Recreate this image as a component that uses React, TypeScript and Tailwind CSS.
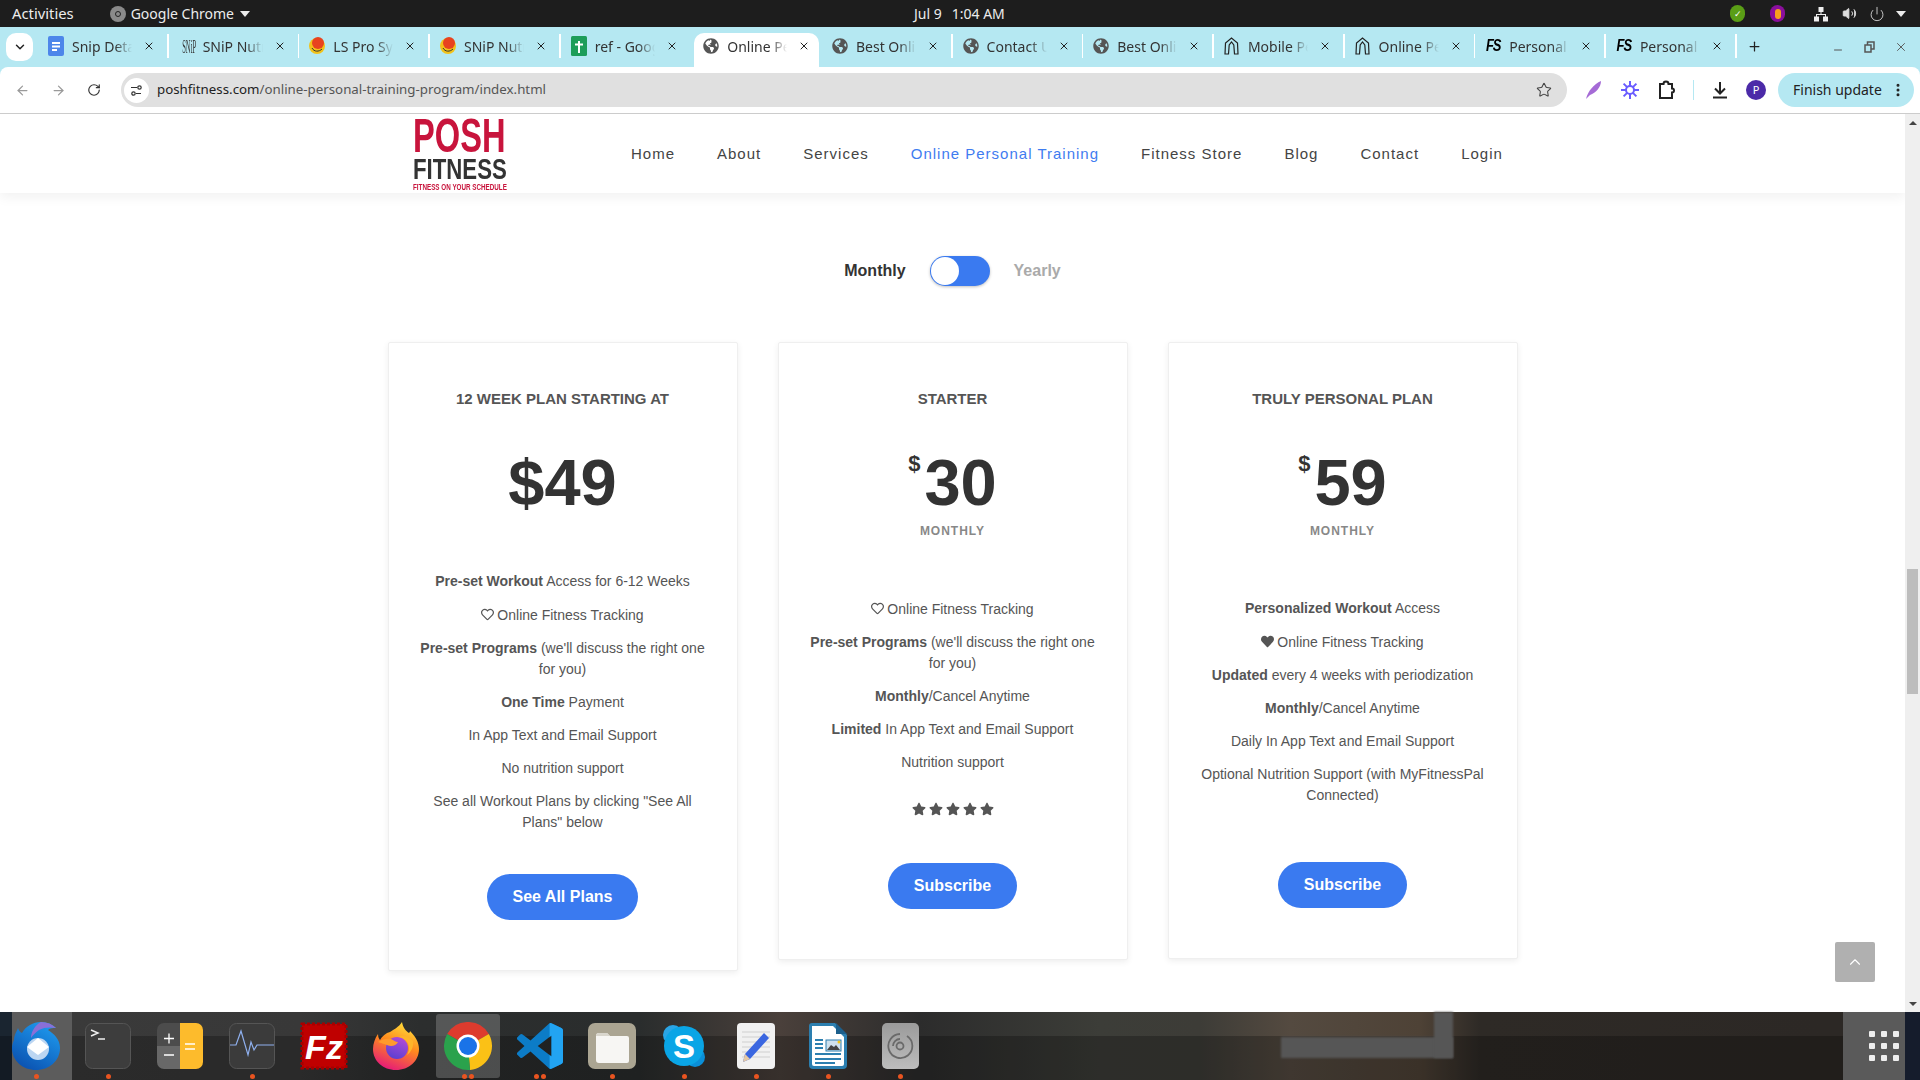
import React from "react";
import { FaGlobeAmericas, FaHeart, FaRegHeart, FaStar } from "react-icons/fa";
import { ArrowLeft, ArrowRight, RotateCw, X, Star, Plus, Minus, EllipsisVertical, ChevronUp, ChevronDown, Volume2, Power } from "lucide-react";

const Globe = () => <FaGlobeAmericas size={16} color="#555" />;
const FS = () => <span className="w-4 origin-center scale-y-[1.25] text-center text-[13px] leading-4 font-black tracking-[-1px] text-black italic [font-family:'Liberation_Sans',sans-serif]">FS</span>;
const Arch = () => (
  <svg width="15" height="18" viewBox="0 0 15 18" fill="none" stroke="#222" strokeWidth="1.2"><path d="M1 17 L1.500 6 L7.500 1 L13.500 6 L14 17 H10.500 L9.800 8 L7.500 5 L5.200 8 L4.500 17 Z" /></svg>
);
const Doc = () => (
  <svg width="16" height="20" viewBox="0 0 16 20"><rect width="16" height="20" rx="2" fill="#4d86ea" /><path d="M4 7h8M4 10.500h8M4 14h5" stroke="#fff" strokeWidth="1.800" /></svg>
);
const Snip = () => <span className="w-4 origin-center scale-x-[0.6] scale-y-[1.7] text-center text-[11px] leading-[10px] text-[#333] [font-family:'Liberation_Serif',serif]">SNiP</span>;
const Ball = () => (
  <svg width="16" height="20" viewBox="0 0 16 20"><circle cx="8" cy="10" r="8" fill="#f2c21a" /><circle cx="9" cy="7" r="6" fill="#e8431f" /><path d="M3 12c2 4 7 4 10 1" stroke="#333" fill="none" /></svg>
);
const Sheet = () => (
  <svg width="16" height="20" viewBox="0 0 16 20"><rect width="16" height="20" rx="1.500" fill="#1d9d59" /><path d="M8 5v12M4 8.500h8" stroke="#fff" strokeWidth="2" /></svg>
);

const tabs: [React.ReactNode, string, boolean?][] = [
  [<Doc />, "Snip Details"],
  [<Snip />, "SNiP Nutrition"],
  [<Ball />, "LS Pro System"],
  [<Ball />, "SNiP Nutrition"],
  [<Sheet />, "ref - Google"],
  [<Globe />, "Online Personal", true],
  [<Globe />, "Best Online"],
  [<Globe />, "Contact Us"],
  [<Globe />, "Best Online"],
  [<Arch />, "Mobile Personal"],
  [<Arch />, "Online Personal"],
  [<FS />, "Personal Trainer"],
  [<FS />, "Personal Trainer"],
];

function TopBar() {
  return (
    <div className="relative flex h-[27px] shrink-0 items-center bg-[#1d1d1d] pr-[14px] pl-3 text-[14px] text-[#ececec]">
      <span className="text-[14.800px]">Activities</span>
      <span className="ml-[36px] flex h-4 w-4 items-center justify-center rounded-full bg-[#8a8a8a]"><span className="h-[6px] w-[6px] rounded-full border border-[#222]" /></span>
      <span className="ml-[5px]">Google Chrome</span>
      <span className="ml-[6px] h-0 w-0 border-x-[5px] border-t-[6px] border-x-transparent border-t-[#ececec]" />
      <span className="ml-[664px]">Jul 9</span>
      <span className="ml-[10px]">1:04 AM</span>
      <div className="ml-auto flex items-center">
        <span className="flex h-[17px] w-[15px] items-center justify-center rounded-full bg-[#5a9e16] text-[9px] leading-none text-white">✓</span>
        <span className="ml-[25px] flex h-[17px] w-[15px] items-center justify-center rounded-full bg-[#8a0f9c]">
          <span className="h-[10px] w-[6px] rounded-full bg-[#f7a11e]" />
        </span>
        <svg className="ml-[28px]" width="16" height="16" viewBox="0 0 16 16" fill="#eee"><rect x="5.500" y="1" width="5" height="5" /><rect x="1" y="10.500" width="5" height="5" /><rect x="10" y="10.500" width="5" height="5" /><path d="M7.500 6h1v2H13v3h-1V9H4v2H3V8h4.500z" /></svg>
        <Volume2 className="ml-[13px]" size={15} color="#ddd" fill="#ddd" strokeWidth={1.500} />
        <Power className="ml-[12px]" size={16} color="#ddd" strokeWidth={1.300} />
        <span className="ml-[11px] h-0 w-0 border-x-[5px] border-t-[6px] border-x-transparent border-t-[#ececec]" />
      </div>
    </div>
  );
}

function TabStrip() {
  return (
    <div className="flex h-[40px] shrink-0 items-stretch bg-[#b5e8f2] pl-[6px] text-[14px] text-[#333]">
      <div className="my-[6px] mr-[5px] flex w-[27px] items-center justify-center rounded-[10px] bg-white"><ChevronDown size={14} strokeWidth={2.500} color="#222" /></div>
      {tabs.map(([icon, title, active], i) => (
        <div key={i} className={active ? "mt-[6px] mr-[2.670px] ml-[3px] flex w-[125px] items-center rounded-t-[10px] bg-white pb-[8px] pl-[9px]" : "flex w-[130.670px] items-center pb-[2px] pl-[10px]"}>
          <span className="flex w-4 shrink-0 items-center justify-center">{icon}</span>
          <span className="ml-2 w-[60px] overflow-hidden whitespace-nowrap [mask-image:linear-gradient(to_right,black_72%,transparent)]">{title}</span>
          <X className="ml-[11px] shrink-0" size={12} strokeWidth={2} color="#222" />
          {!active && i !== 4 && <span className="ml-auto h-[24px] w-[1.500px] bg-white" />}
        </div>
      ))}
      <Plus className="mb-[2px] ml-[10px] self-center" size={15} strokeWidth={2} color="#222" />
      <div className="ml-auto flex items-center pr-[12px]">
        <Minus size={12} strokeWidth={2} color="#555" className="mt-[6px]" />
        <svg className="ml-[20px]" width="11" height="12" viewBox="0 0 11 12" fill="none" stroke="#555" strokeWidth="1.500"><rect x="3.500" y="1" width="6.500" height="7" /><rect x="1" y="4" width="6" height="7" fill="#b5e8f2" /></svg>
        <X className="ml-[19px]" size={14} strokeWidth={1.600} color="#555" />
      </div>
    </div>
  );
}

function Toolbar() {
  return (
    <div className="flex h-[46px] shrink-0 items-center rounded-t-[8px] bg-white pr-[6px] pl-[15px] text-[14px]">
      <ArrowLeft size={15} color="#9a9a9a" strokeWidth={2} />
      <ArrowRight className="ml-[21px]" size={15} color="#9a9a9a" strokeWidth={2} />
      <RotateCw className="ml-[21px]" size={14} color="#333" strokeWidth={2} />
      <div className="ml-[20px] flex h-[34px] w-[1446px] items-center rounded-full bg-[#e0e0e0] pr-[15px] pl-[3px]">
        <span className="flex h-[25px] w-[25px] items-center justify-center rounded-full bg-white">
          <svg width="13" height="13" viewBox="0 0 13 13" fill="none" stroke="#333" strokeWidth="1.200"><path d="M1 3.500h6M11 9.500H6" /><circle cx="9.500" cy="3.500" r="1.700" /><circle cx="3.500" cy="9.500" r="1.700" /></svg>
        </span>
        <span className="ml-[8px] text-[13.300px] text-[#222]">poshfitness.com<span className="text-[#555]">/online-personal-training-program/index.html</span></span>
        <Star className="ml-auto" size={16} color="#444" strokeWidth={1.600} />
      </div>
      <svg className="ml-[18px]" width="18" height="20" viewBox="0 0 18 20"><path d="M1 19C3 11 9 4 16 1c0 6-5 12-11 14z" fill="#a56bd6" /></svg>
      <svg className="ml-[18px]" width="18" height="18" viewBox="0 0 18 18" stroke="#6a5cff" strokeWidth="2" fill="none"><circle cx="9" cy="9" r="4" /><path d="M9 0v5M9 13v5M0 9h5M13 9h5M2.600 2.600l3.500 3.500M11.900 11.900l3.500 3.500M15.400 2.600l-3.500 3.500M6.100 11.900l-3.500 3.500" /></svg>
      <svg className="ml-[18px]" width="18" height="20" viewBox="0 0 18 20" fill="none" stroke="#222" strokeWidth="2"><path d="M3 4h3.500a2.500 2.500 0 0 1 5 0H15v4.500a2 2 0 0 1 0 4V18H3z" /></svg>
      <span className="ml-[18px] h-[20px] w-px bg-[#b5e8f2]" />
      <svg className="ml-[17px]" width="18" height="18" viewBox="0 0 18 18" fill="none" stroke="#222" strokeWidth="2"><path d="M9 1v11M4 7.500l5 5 5-5M2 16.500h14" /></svg>
      <span className="ml-[17px] flex h-[20px] w-[20px] items-center justify-center rounded-full bg-[#4b2aa8] text-[11px] text-white">P</span>
      <div className="ml-[12px] flex h-[34px] w-[136px] items-center rounded-full bg-[#b5e8f2] pb-[2px] pl-[15px] text-[14px] text-[#222]">
        <span className="whitespace-nowrap">Finish update</span>
        <EllipsisVertical className="mt-[2px] mr-[8px] ml-auto" size={16} color="#222" strokeWidth={2.500} />
      </div>
    </div>
  );
}

function Logo() {
  return (
    <div className="flex w-[94px] flex-col pt-1 font-bold whitespace-nowrap [font-family:'Liberation_Sans',sans-serif]">
      <span className="h-[35px] origin-left scale-x-[0.68] text-[48px] leading-[35px] text-[#c8143c]">POSH</span>
      <span className="mt-[5px] h-[22px] origin-left scale-x-[0.74] text-[30px] leading-[22px] text-[#333]">FITNESS</span>
      <span className="mt-1 h-[6px] origin-left scale-x-[0.74] text-[8.500px] leading-[6px] text-[#c8143c]">FITNESS ON YOUR SCHEDULE</span>
    </div>
  );
}

const navItems = ["Home", "About", "Services", "Online Personal Training", "Fitness Store", "Blog", "Contact", "Login"];

function Header() {
  return (
    <div className="relative flex h-[79px] items-start pl-[413px] shadow-[0_4px_12px_rgba(0,0,0,0.06)]">
      <Logo />
      <nav className="ml-[124px] flex h-full items-center gap-[42px] pt-[2px] text-[15px] tracking-[1px] text-[#444]">
        {navItems.map((n) => (
          <span key={n} className={n.startsWith("Online") ? "text-[#3f7cf0]" : ""}>{n}</span>
        ))}
      </nav>
    </div>
  );
}

type Item = React.ReactNode;

function Card({ title, price, dollar, monthly, items, button, listMt, stars, btnMt }: { title: string; price: string; dollar?: boolean; monthly?: boolean; items: Item[]; button: string; listMt: string; stars?: boolean; btnMt: string }) {
  return (
    <div className="flex w-[350px] flex-col items-center rounded-[2px] border border-[#efefef] bg-white px-[25px] pt-[45px] pb-[50px] text-center text-[14px] leading-[21px] text-[#555] shadow-[0_2px_6px_rgba(0,0,0,0.07)]">
      <h3 className="text-[15px] font-bold uppercase">{title}</h3>
      <div className="mt-[38px] flex h-[72px] justify-center text-[65px] leading-[72px] font-bold text-[#333]">
        {dollar && <span className="mt-[5px] mr-[4px] text-[22px] leading-6">$</span>}
        {price}
      </div>
      {monthly && <div className="mt-[2px] text-[12px] leading-5 font-bold tracking-[1px] text-[#888]">MONTHLY</div>}
      <ul className={listMt + " flex flex-col gap-[12px]"}>
        {items.map((it, i) => <li key={i}>{it}</li>)}
      </ul>
      {stars && (
        <div className="mt-[28px] flex h-4 items-center gap-[3px] text-[#555]">
          {[0, 1, 2, 3, 4].map((i) => <FaStar key={i} size={14} />)}
        </div>
      )}
      <button className={btnMt + " h-[46px] rounded-full bg-[#3a7af0] px-[26px] pb-px text-[16px] font-bold text-white"}>{button}</button>
    </div>
  );
}

const B = ({ children }: { children: React.ReactNode }) => <b className="font-bold">{children}</b>;
const OutlineHeart = () => <FaRegHeart size={13} className="mr-[3px] inline align-[-1px]" />;
const SolidHeart = () => <FaHeart size={13} className="mr-[3px] inline align-[-1px]" />;

function Pricing() {
  return (
    <div className="flex items-start justify-center gap-[40px]">
      <Card
        title="12 Week Plan Starting at"
        price="$49"
        listMt="mt-[52px]"
        btnMt="mt-[41px]"
        button="See All Plans"
        items={[
          <><B>Pre-set Workout</B> Access for 6-12 Weeks</>,
          <div className="pt-px"><OutlineHeart />Online Fitness Tracking</div>,
          <><B>Pre-set Programs</B> (we'll discuss the right one for you)</>,
          <><B>One Time</B> Payment</>,
          "In App Text and Email Support",
          "No nutrition support",
          <>See all Workout Plans by clicking "See All Plans" below</>,
        ]}
      />
      <Card
        title="Starter"
        price="30"
        dollar
        monthly
        stars
        listMt="mt-[58px]"
        btnMt="mt-[46px]"
        button="Subscribe"
        items={[
          <><OutlineHeart />Online Fitness Tracking</>,
          <><B>Pre-set Programs</B> (we'll discuss the right one for you)</>,
          <><B>Monthly</B>/Cancel Anytime</>,
          <><B>Limited</B> In App Text and Email Support</>,
          "Nutrition support",
        ]}
      />
      <Card
        title="Truly Personal Plan"
        price="59"
        dollar
        monthly
        listMt="mt-[57px]"
        btnMt="mt-[56px]"
        button="Subscribe"
        items={[
          <><B>Personalized Workout</B> Access</>,
          <div className="pt-px"><SolidHeart />Online Fitness Tracking</div>,
          <><B>Updated</B> every 4 weeks with periodization</>,
          <><B>Monthly</B>/Cancel Anytime</>,
          "Daily In App Text and Email Support",
          "Optional Nutrition Support (with MyFitnessPal Connected)",
        ]}
      />
    </div>
  );
}

function Toggle() {
  return (
    <div className="mt-[63px] mb-[56px] flex h-[30px] items-center justify-center text-[16px] font-bold">
      <span className="text-[#333]">Monthly</span>
      <span className="mx-[24px] flex h-[30px] w-[60px] items-center rounded-full bg-[#3a7af0] pl-px shadow-[0_1px_3px_rgba(0,0,0,0.25)]">
        <span className="h-[28px] w-[28px] rounded-full bg-white" />
      </span>
      <span className="text-[#aaa]">Yearly</span>
    </div>
  );
}

function Scrollbar() {
  return (
    <div className="flex w-[15px] shrink-0 flex-col items-center bg-[#efefef] pt-[7px]">
      <span className="h-0 w-0 border-x-[4px] border-b-[4px] border-x-transparent border-b-[#444]" />
      <span className="mt-[444px] h-[125px] w-[11px] bg-[#bdbdbd]" />
      <span className="mt-auto mb-[6px] h-0 w-0 border-x-[4px] border-t-[4px] border-x-transparent border-t-[#444]" />
    </div>
  );
}

function Terminal() {
  return (
    <svg width="46" height="46" viewBox="0 0 46 46"><rect x=".5" y=".5" width="45" height="45" rx="7" fill="#3d3d3d" stroke="#555" /><path d="M6 7l7 3-7 3M13 16h7" stroke="#eee" strokeWidth="1.500" fill="none" /></svg>
  );
}
function Calc() {
  return (
    <svg width="46" height="46" viewBox="0 0 46 46"><clipPath id="cc"><rect width="46" height="46" rx="7" /></clipPath><g clipPath="url(#cc)"><rect width="23" height="23" fill="#4c4c4c" /><rect y="23" width="23" height="23" fill="#686868" /><rect x="23" width="23" height="46" fill="#fdbb2c" /></g><path d="M7 15.500h10M12 10.500v10M7 32h10M28 21h10M28 26h10" stroke="#fff" strokeWidth="1.300" /></svg>
  );
}
function Monitor() {
  return (
    <svg width="46" height="46" viewBox="0 0 46 46"><rect x=".5" y=".5" width="45" height="45" rx="7" fill="#3b3b3b" stroke="#555" /><path d="M1 22h6l5-14 7 24 3-13 3 8 3-5h17" stroke="#8fb0ee" strokeWidth="1.200" fill="none" /></svg>
  );
}
function FileZilla() {
  return (
    <svg width="48" height="48" viewBox="0 0 48 48"><rect x="2" y="2" width="44" height="44" fill="#bf0000" stroke="#a50000" strokeWidth="3" strokeDasharray="3 2" /><text x="24" y="37" textAnchor="middle" fontFamily="Liberation Sans" fontWeight="700" fontStyle="italic" fontSize="34" fill="#fff">Fz</text></svg>
  );
}
function Firefox() {
  return (
    <svg width="46" height="48" viewBox="0 0 46 48">
      <defs>
        <linearGradient id="ffa" x1="0.700" y1="0" x2="0.300" y2="1"><stop offset="0" stopColor="#ffe03a" /><stop offset=".45" stopColor="#ff8a1e" /><stop offset="1" stopColor="#e5177b" /></linearGradient>
        <linearGradient id="ffb" x1="0.700" y1="0" x2="0.300" y2="1"><stop offset="0" stopColor="#b24bd6" /><stop offset="1" stopColor="#5a3fd1" /></linearGradient>
      </defs>
      <path d="M29 0c1 6 4 9 7 11 1-1 1-2 1-2 5 5 9 11 9 18 0 12-10 21-23 21S0 39 0 27C0 22 2 16 5 12c0 3 1 5 2 6 2-4 6-7 10-8 3-2 9-5 12-10z" fill="url(#ffa)" />
      <circle cx="24" cy="26" r="11" fill="url(#ffb)" />
      <path d="M5 20c4-3 9-4 13-3 3 1 4 3 7 3-2 4-7 5-11 3-3-1-6-2-9-3z" fill="#ff9b2b" />
      <path d="M25 15c5 0 11 4 11 11 0 3-1 5-2 7 4-3 7-8 6-14-5-5-10-6-15-4z" fill="#ffb52a" />
    </svg>
  );
}
function Chrome() {
  return (
    <svg width="48" height="48" viewBox="0 0 48 48">
      <path d="M24 24L3.200 12A24 24 0 0 1 44.800 12Z" fill="#dd3b2e" />
      <path d="M24 24L44.800 12A24 24 0 0 1 26 47.900Z" fill="#fbc116" />
      <path d="M24 24L26 47.900A24 24 0 0 1 3.200 12Z" fill="#2aa24c" />
      <circle cx="24" cy="24" r="11.500" fill="#fff" />
      <circle cx="24" cy="24" r="9" fill="#1a73e8" />
    </svg>
  );
}
function VSCode() {
  const d = "M23.150 2.587L18.210.21a1.494 1.494 0 0 0-1.705.29l-9.460 8.630-4.120-3.128a.999.999 0 0 0-1.276.057L.327 7.261A1 1 0 0 0 .326 8.740L3.899 12 .326 15.260a1 1 0 0 0 .001 1.479L1.650 17.940a.999.999 0 0 0 1.276.057l4.120-3.128 9.460 8.630a1.492 1.492 0 0 0 1.704.29l4.942-2.377A1.500 1.500 0 0 0 24 20.060V3.939a1.500 1.500 0 0 0-.85-1.352zm-5.146 14.861L10.826 12l7.178-5.448v10.896z";
  return (
    <svg width="46" height="46" viewBox="0 0 24 24">
      <clipPath id="vs"><rect x="17" width="7" height="24" /></clipPath>
      <path d={d} fill="#0c7cc7" />
      <path d={d} fill="#22a4f2" clipPath="url(#vs)" />
    </svg>
  );
}
function Files() {
  return (
    <div className="flex h-[46px] w-[48px] items-center justify-center rounded-[7px] bg-[#aba592]">
      <svg width="36" height="36" viewBox="0 0 36 36"><path d="M2 8a3 3 0 0 1 3-3h8l3 3h17a2 2 0 0 1 2 2v23a2 2 0 0 1-2 2H5a3 3 0 0 1-3-3z" fill="#f7f6f3" /><path d="M2 8a3 3 0 0 1 3-3h8l3 3H2z" fill="#d9d6cc" /></svg>
    </div>
  );
}
function Skype() {
  return (
    <svg width="44" height="44" viewBox="0 0 44 44">
      <circle cx="11" cy="11" r="10" fill="#2aa5e6" />
      <circle cx="33" cy="33" r="10" fill="#0a8fd8" />
      <circle cx="22" cy="22" r="20" fill="#0aa5e6" />
      <text x="22" y="34" textAnchor="middle" fontFamily="Liberation Sans" fontWeight="700" fontSize="33" fill="#fff">S</text>
    </svg>
  );
}
function Editor() {
  return (
    <svg width="38" height="46" viewBox="0 0 38 46">
      <rect width="38" height="46" rx="4" fill="#f1f1f1" />
      <path d="M5 9h28M5 14h28M5 19h28M5 24h28M5 29h28M5 34h28" stroke="#cfcfcf" strokeWidth="1" />
      <path d="M27 10l5 5-19 21-7 3 2-8z" fill="#3a66e0" />
      <path d="M8 31l5 5-7 3z" fill="#e5c9a5" />
    </svg>
  );
}
function Writer() {
  return (
    <svg width="38" height="46" viewBox="0 0 38 46">
      <path d="M3 0h23l12 12v30a4 4 0 0 1-4 4H4a4 4 0 0 1-4-4V3a3 3 0 0 1 3-3z" fill="#2c7fb0" />
      <path d="M3 3h21l11 11v27a2 2 0 0 1-2 2H5a2 2 0 0 1-2-2z" fill="#fff" />
      <path d="M27 0l11 11h-11z" fill="#1c5f8c" />
      <path d="M6 17h8M6 21h8M6 25h8M6 31h26M6 36h26M6 40h20" stroke="#2c7fb0" strokeWidth="2" />
      <rect x="17" y="17" width="15" height="11" fill="#cfe1ee" stroke="#2c7fb0" />
      <path d="M18 27l4-5 3 2 2-2 4 5z" fill="#444" />
      <circle cx="30" cy="19" r="1.500" fill="#f5c518" />
    </svg>
  );
}
function Disk() {
  return (
    <div className="flex h-[46px] w-[37px] items-center justify-center rounded-[5px] bg-gradient-to-b from-[#9b9b9b] to-[#bdbdbd]">
      <svg width="28" height="28" viewBox="0 0 28 28" fill="none" stroke="#6a6a6a" strokeWidth="1.800"><path d="M21 4a12 12 0 1 1-7-2" /><circle cx="14" cy="14" r="3.500" /><path d="M14 7a7 7 0 0 0-7 7" /></svg>
    </div>
  );
}
function Thunderbird() {
  return (
    <svg width="50" height="50" viewBox="0 0 50 50">
      <defs><linearGradient id="tb" x1="0.800" y1="0" x2="0.200" y2="1"><stop offset="0" stopColor="#1f9cf0" /><stop offset="1" stopColor="#0a4fae" /></linearGradient></defs>
      <path d="M3 19c0-5 3-9 4-12 1 3 2 4 4 5C15 5 22 1 30 1c6 0 11 2 15 6-3 0-6 0-8 2 6 4 12 9 12 18 0 13-11 22-24 22S1 40 1 27c0-3 1-6 2-8z" fill="url(#tb)" />
      <path d="M30 1c6 0 11 2 15 6-5-1-12-1-17 2-3 2-6 5-8 8 0-6 4-13 10-16z" fill="#8a6fd8" />
      <circle cx="27" cy="28" r="11" fill="#bcd6f2" />
      <path d="M16 26l11-9 11 9-11 8z" fill="#ffffff" />
    </svg>
  );
}

const dockItems: { icon: React.ReactNode; dots: number; hi?: boolean }[] = [
  { icon: <Thunderbird />, dots: 1 },
  { icon: <Terminal />, dots: 1 },
  { icon: <Calc />, dots: 0 },
  { icon: <Monitor />, dots: 1 },
  { icon: <FileZilla />, dots: 0 },
  { icon: <Firefox />, dots: 0 },
  { icon: <Chrome />, dots: 2, hi: true },
  { icon: <VSCode />, dots: 2 },
  { icon: <Files />, dots: 1 },
  { icon: <Skype />, dots: 1 },
  { icon: <Editor />, dots: 1 },
  { icon: <Writer />, dots: 1 },
  { icon: <Disk />, dots: 1 },
];

function Dock() {
  return (
    <div className="relative flex h-[68px] shrink-0 items-stretch bg-[linear-gradient(to_right,#1a2530_0px,#1a2530_10px,#3a3a3a_72px,#383838_300px,#2c2e2e_420px,#2a2d2d_640px,#4a403b_780px,#2c2c2c_920px,#3c3d38_1100px,#3d3c37_1200px,#544a40_1290px,#4e4236_1420px,#2e2a26_1480px,#2c2825_1820px)]">
      <div className="absolute inset-x-0 top-[24px] bottom-0 bg-black/25" />
      <div className="absolute top-[25px] left-[1281px] h-[21px] w-[172px] bg-[#565656] blur-[1px]" />
      <div className="absolute top-0 left-[1434px] h-[46px] w-[19px] bg-[#565656] blur-[1px]" />
      <div className="absolute top-0 bottom-0 left-[12px] w-[60px] bg-[#5c5c5c]" />
      {dockItems.map((d, i) => (
        <div key={i} className="relative flex w-[72px] shrink-0 flex-col items-center pt-[11px]">
          {d.hi && <div className="absolute top-[2px] bottom-[2px] left-[4px] w-[64px] rounded-[3px] bg-white/20" />}
          <div className="relative flex h-[46px] items-center justify-center">{d.icon}</div>
          <div className="absolute bottom-[1px] flex gap-[2px]">
            {Array.from({ length: d.dots }).map((_, k) => <span key={k} className="h-[5px] w-[5px] rounded-full bg-[#e95420]" />)}
          </div>
        </div>
      ))}
      <div className="relative mr-[15px] ml-auto flex w-[62px] items-center justify-start bg-[#5a5a5a] pl-[26px]">
        <div className="grid grid-cols-3 gap-[6px]">
          {Array.from({ length: 9 }).map((_, i) => <span key={i} className="h-[6px] w-[6px] rounded-[1px] bg-[#eee]" />)}
        </div>
      </div>
      <div className="absolute top-0 right-0 bottom-0 w-[15px] bg-[#151c2c]" />
    </div>
  );
}

export default function App() {
  return (
    <div className="flex h-[1080px] w-[1920px] flex-col overflow-hidden bg-[#b5e8f2] [font-family:'Noto_Sans',sans-serif]">
      <TopBar />
      <TabStrip />
      <Toolbar />
      <div className="h-px shrink-0 bg-[#ccc]" />
      <div className="flex min-h-0 flex-1 bg-white">
        <div className="relative flex-1 overflow-hidden [font-family:'Liberation_Sans',sans-serif]">
          <Header />
          <Toggle />
          <Pricing />
          <div className="absolute top-[828px] right-[30px] flex h-[40px] w-[40px] items-center justify-center rounded-[2px] bg-[#b0b0b0]">
            <ChevronUp size={18} color="#fff" strokeWidth={1.500} />
          </div>
        </div>
        <Scrollbar />
      </div>
      <Dock />
    </div>
  );
}
